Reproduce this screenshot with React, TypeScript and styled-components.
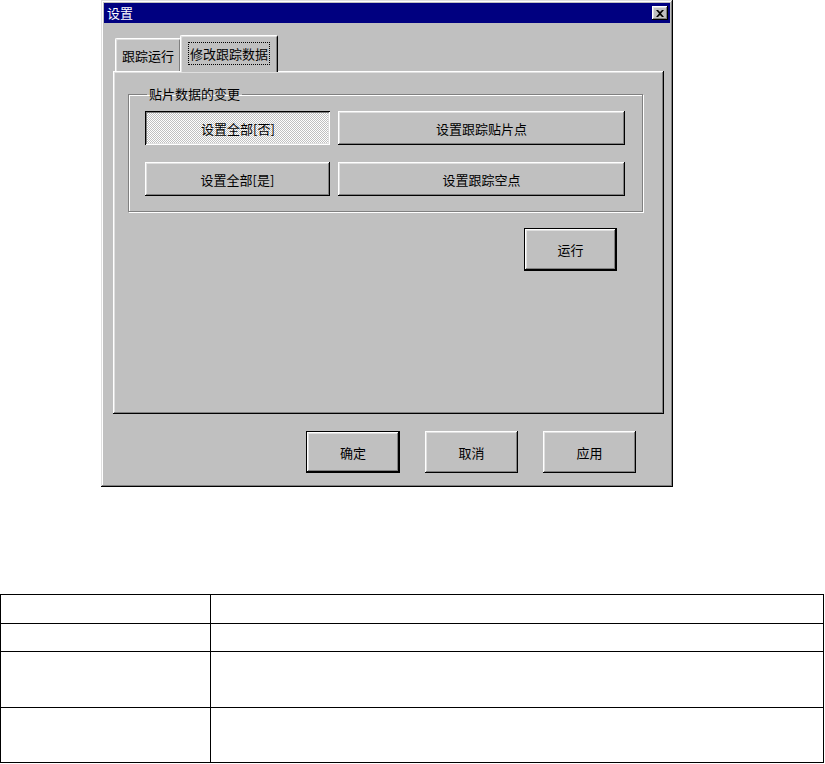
import React from 'react';
import styled, { createGlobalStyle, css } from 'styled-components';

const GlobalStyle = createGlobalStyle`
  html, body {
    margin: 0;
    padding: 0;
    background: #ffffff;
  }
  body {
    font-family: "Noto Sans CJK SC", "DejaVu Sans", sans-serif;
    font-size: 13px;
    color: #000;
  }
`;

const raised = css`
  box-shadow: inset -1px -1px #000, inset 1px 1px #fff, inset -2px -2px #808080, inset 2px 2px #dfdfdf;
`;

const Page = styled.div`
  width: 825px;
`;

const DialogWrap = styled.div`
  padding-left: 101px;
`;

const Dialog = styled.div`
  box-sizing: border-box;
  width: 572px;
  height: 487px;
  padding: 3px;
  background: #c0c0c0;
  box-shadow: inset -1px -1px #000, inset 1px 1px #dfdfdf, inset -2px -2px #808080, inset 2px 2px #fff;
  display: flex;
  flex-direction: column;
`;

const TitleBar = styled.div`
  height: 20px;
  background: #000080;
  color: #fff;
  display: flex;
  align-items: center;
  justify-content: space-between;
  padding: 0 2px 0 3px;
  font-size: 13px;
  line-height: 20px;
`;

const CloseButton = styled.div`
  width: 16px;
  height: 14px;
  background: #c0c0c0;
  ${raised};
  display: flex;
  align-items: center;
  justify-content: center;
`;

const Body = styled.div`
  padding: 11px 6px 0 9px;
  display: flex;
  flex-direction: column;
`;

const TabRow = styled.div`
  height: 37px;
  display: flex;
  align-items: flex-end;
  padding-left: 2px;
  position: relative;
  z-index: 1;
`;

const Tab = styled.div<{ $active?: boolean }>`
  box-sizing: border-box;
  width: ${(p) => (p.$active ? 98 : 66)}px;
  height: ${(p) => (p.$active ? 37 : 33)}px;
  margin-bottom: ${(p) => (p.$active ? -1 : 0)}px;
  margin-left: ${(p) => (p.$active ? -1 : 0)}px;
  background: #c0c0c0;
  border-top: 1px solid #fff;
  border-left: 1px solid #fff;
  border-right: 1px solid #000;
  border-radius: 2px 2px 0 0;
  box-shadow: inset 1px 1px #dfdfdf, inset -1px 0 #808080;
  display: flex;
  align-items: center;
  justify-content: center;
  padding-bottom: ${(p) => (p.$active ? 2 : 0)}px;
`;

const TabLabel = styled.span<{ $focused?: boolean }>`
  padding: 2px 1px;
  outline: ${(p) => (p.$focused ? '1px dotted #000' : 'none')};
  line-height: 17px;
`;

const Panel = styled.div`
  box-sizing: border-box;
  width: 551px;
  height: 343px;
  padding: 15px 0 0 15px;
  background: #c0c0c0;
  box-shadow: inset -1px -1px #000, inset 1px 1px #fff, inset -2px -2px #808080, inset 2px 2px #dfdfdf;
  display: flex;
  flex-direction: column;
`;

const GroupBox = styled.fieldset`
  box-sizing: border-box;
  width: 515px;
  margin: 0;
  padding: 9px 16px 15px 16px;
  border: 1px solid #808080;
  box-shadow: inset 1px 1px #fff, 1px 1px #fff;
  display: grid;
  grid-template-columns: 185px 287px;
  column-gap: 8px;
  row-gap: 17px;
`;

const Legend = styled.legend`
  padding: 0 2px;
  margin-left: 2px;
  line-height: 16px;
  font-size: 13px;
`;

const Button = styled.div<{ $pressed?: boolean; $default?: boolean; $w?: number; $h?: number }>`
  box-sizing: border-box;
  height: ${(p) => p.$h ?? 34}px;
  width: ${(p) => (p.$w ? `${p.$w}px` : 'auto')};
  display: flex;
  align-items: center;
  justify-content: center;
  background: #c0c0c0;
  font-size: 13px;
  ${raised};
  ${(p) =>
    p.$default &&
    css`
      border: 1px solid #000;
    `}
  ${(p) =>
    p.$pressed &&
    css`
      background: repeating-conic-gradient(#ffffff 0 25%, #c0c0c0 0 50%) 0 0 / 2px 2px;
      box-shadow: inset 1px 1px #000, inset -1px -1px #fff, inset 2px 2px #808080, inset -2px -2px #dfdfdf;
      padding-top: 1px;
      padding-left: 1px;
    `}
`;

const RunRow = styled.div`
  display: flex;
  justify-content: flex-end;
  padding-right: 47px;
  margin-top: 16px;
`;

const FooterRow = styled.div`
  display: flex;
  justify-content: flex-end;
  gap: 25px;
  margin-top: 17px;
  padding-right: 28px;
`;

const Grid = styled.table`
  margin-top: 107px;
  width: 824px;
  border-collapse: collapse;
  table-layout: fixed;
`;

const Cell = styled.td<{ $h: number }>`
  border: 1px solid #000;
  height: ${(p) => p.$h}px;
  padding: 0;
`;

const rows = [28, 27, 55, 54];

export default function App() {
  return (
    <Page>
      <GlobalStyle />
      <DialogWrap>
        <Dialog>
          <TitleBar>
            <span>设置</span>
            <CloseButton>
              <svg width="8" height="7" viewBox="0 0 8 7">
                <path d="M0 0h2l2 2 2-2h2L5 3.5 8 7H6L4 5 2 7H0l3-3.5z" fill="#000" />
              </svg>
            </CloseButton>
          </TitleBar>
          <Body>
            <TabRow>
              <Tab>
                <TabLabel>跟踪运行</TabLabel>
              </Tab>
              <Tab $active>
                <TabLabel $focused>修改跟踪数据</TabLabel>
              </Tab>
            </TabRow>
            <Panel>
              <GroupBox>
                <Legend>贴片数据的变更</Legend>
                <Button $pressed>设置全部[否]</Button>
                <Button>设置跟踪贴片点</Button>
                <Button>设置全部[是]</Button>
                <Button>设置跟踪空点</Button>
              </GroupBox>
              <RunRow>
                <Button $default $w={93} $h={43}>运行</Button>
              </RunRow>
            </Panel>
            <FooterRow>
              <Button $default $w={94} $h={42}>确定</Button>
              <Button $w={93} $h={42}>取消</Button>
              <Button $w={93} $h={42}>应用</Button>
            </FooterRow>
          </Body>
        </Dialog>
      </DialogWrap>
      <Grid>
        <colgroup>
          <col style={{ width: 210 }} />
          <col />
        </colgroup>
        <tbody>
          {rows.map((h, i) => (
            <tr key={i}>
              <Cell $h={h} />
              <Cell $h={h} />
            </tr>
          ))}
        </tbody>
      </Grid>
    </Page>
  );
}
